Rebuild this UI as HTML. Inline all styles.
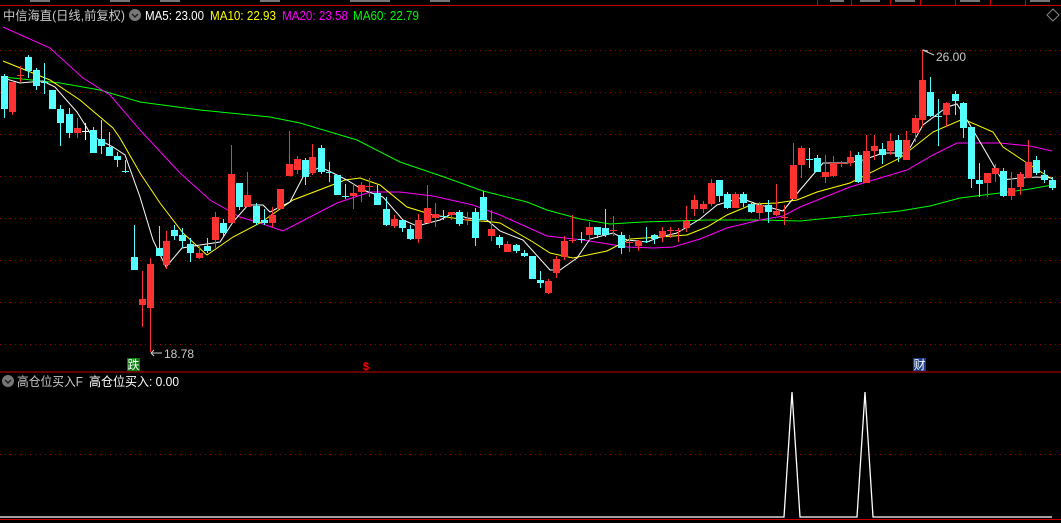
<!DOCTYPE html>
<html><head><meta charset="utf-8"><style>
html,body{margin:0;padding:0;background:#000;width:1061px;height:523px;overflow:hidden}
svg{display:block}
text{font-family:"Liberation Sans","Noto Sans CJK SC",sans-serif}
</style></head><body>
<svg width="1061" height="523" viewBox="0 0 1061 523" xmlns="http://www.w3.org/2000/svg">
<rect width="1061" height="523" fill="#000"/>
<!-- top bar -->
<line x1="0" y1="5.5" x2="1061" y2="5.5" stroke="#c00" stroke-width="1"/>
<g stroke="#c00"><line x1="817.5" y1="0" x2="817.5" y2="5"/><line x1="851.5" y1="0" x2="851.5" y2="5"/><line x1="890.5" y1="0" x2="890.5" y2="5"/><line x1="920.5" y1="0" x2="920.5" y2="5"/><line x1="955.5" y1="0" x2="955.5" y2="5"/><line x1="990.5" y1="0" x2="990.5" y2="5"/><line x1="1025.5" y1="0" x2="1025.5" y2="5"/></g>
<g fill="#777"><rect x="30" y="0" width="20" height="2"/><rect x="110" y="0" width="20" height="2"/><rect x="160" y="0" width="20" height="2"/><rect x="260" y="0" width="20" height="2"/><rect x="350" y="0" width="40" height="2"/><rect x="430" y="0" width="20" height="2"/><rect x="830" y="0" width="14" height="2"/><rect x="860" y="0" width="20" height="2"/><rect x="895" y="0" width="20" height="2"/><rect x="960" y="0" width="20" height="2"/><rect x="1030" y="0" width="20" height="2"/></g>
<path d="M1053 9 L1059 15 L1053 21 L1047 15Z" fill="none" stroke="#888"/>
<!-- header -->
<text x="3" y="20" font-size="12.5" fill="#c8c8c8" textLength="122" lengthAdjust="spacingAndGlyphs">中信海直(日线,前复权)</text>
<circle cx="135" cy="15" r="6" fill="#777"/><path d="M132 14 L135 17 L138 14" stroke="#222" stroke-width="1.5" fill="none"/>
<text x="145" y="20" font-size="12.5" fill="#fff" textLength="59" lengthAdjust="spacingAndGlyphs">MA5: 23.00</text>
<text x="210" y="20" font-size="12.5" fill="#ff0" textLength="66" lengthAdjust="spacingAndGlyphs">MA10: 22.93</text>
<text x="282" y="20" font-size="12.5" fill="#f0f" textLength="66" lengthAdjust="spacingAndGlyphs">MA20: 23.58</text>
<text x="353" y="20" font-size="12.5" fill="#0f0" textLength="66" lengthAdjust="spacingAndGlyphs">MA60: 22.79</text>
<!-- grid -->
<g stroke="#a00000" stroke-dasharray="1,4" stroke-width="1">
<line x1="0" y1="50.5" x2="1061" y2="50.5"/><line x1="0" y1="92.5" x2="1061" y2="92.5"/><line x1="0" y1="134.5" x2="1061" y2="134.5"/><line x1="0" y1="176.5" x2="1061" y2="176.5"/><line x1="0" y1="218.5" x2="1061" y2="218.5"/><line x1="0" y1="260.5" x2="1061" y2="260.5"/><line x1="0" y1="302.5" x2="1061" y2="302.5"/><line x1="0" y1="344.5" x2="1061" y2="344.5"/><line x1="0" y1="454.5" x2="1061" y2="454.5"/>
</g>
<!-- MA lines -->
<polyline fill="none" stroke="#0f0" stroke-width="1" points="3,77 60,83 100,90 140,102 200,110 270,117 300,123 357,140 400,162 447,178 483,191 527,202 547,210 580,219 610,224 643,222 707,220 760,220 800,221 830,218 870,214 900,211 930,206 960,198 1000,193 1030,189 1052,185"/>
<polyline fill="none" stroke="#f0f" stroke-width="1" points="3,27 50,48 83,78 110,95 140,130 180,173 210,200 240,217 260,223 283,231 310,217 337,203 370,192 400,192 433,196 473,205 500,215 527,227 547,236 583,240 627,247 653,248 673,247 700,239 727,228 760,220 783,216 800,207 850,187 907,170 933,155 957,143 1000,143 1030,146 1052,151"/>
<polyline fill="none" stroke="#ff0" stroke-width="1" points="3,61 50,80 80,100 113,128 120,138 140,173 160,203 183,233 207,255 233,237 260,223 293,200 327,187 345,180 360,178 380,185 407,207 433,215 467,220 493,222 500,223 533,242 550,253 573,258 607,251 630,239 660,237 687,235 707,227 727,215 753,204 777,203 797,200 817,192 850,183 900,158 933,132 963,119 993,132 1003,147 1027,163 1052,179"/>
<polyline fill="none" stroke="#fff" stroke-width="1" points="3,78 20,83 43,81 55,87 77,112 92,136 113,147 125,155 140,197 153,240 166,267 182,248 200,245 220,242 233,222 248,205 263,205 270,212 290,202 303,177 320,167 333,173 347,180 363,190 383,197 403,220 417,226 440,220 453,213 467,218 487,220 500,231 523,240 550,270 560,270 577,258 590,239 613,233 627,240 647,242 660,237 677,233 700,219 717,205 740,198 757,204 783,211 800,190 823,163 847,163 863,160 883,153 907,153 923,125 947,107 957,104 967,120 983,147 1002,180 1020,178 1037,177 1052,178"/>
<!-- wicks -->
<path stroke="#ff3232" stroke-width="1" fill="none" d="M12.5 82V115M20.5 66V82M77.5 118V138M142.5 271V327M150.5 258V352M166.5 231V269M199.5 245V259M215.5 212V248M231.5 145V223M247.5 172V207M272.5 207V227M280.5 189V209M289.5 131V176M297.5 156V174M312.5 144V175M353.5 183V209M361.5 182V202M369.5 178V197M394.5 215V228M418.5 214V243M427.5 185V223M435.5 203V227M451.5 212V220M467.5 212V225M491.5 210V241M507.5 241V252M548.5 279V294M556.5 256V278M564.5 236V260M572.5 215V243M589.5 222V240M613.5 216V236M629.5 235V252M638.5 240V251M662.5 227V242M670.5 227V238M678.5 228V242M686.5 206V232M694.5 195V216M703.5 201V213M711.5 179V206M735.5 192V208M759.5 202V219M776.5 184V216M784.5 205V225M793.5 143V199M801.5 146V178M825.5 155V183M833.5 156V177M841.5 161V167M850.5 151V166M866.5 135V183M874.5 135V160M890.5 133V155M906.5 131V160M915.5 115V142M922.5 50V127M946.5 102V127M987.5 173V197M995.5 164V182M1011.5 172V200M1020.5 172V195M1028.5 140V178"/>
<path stroke="#55ffff" stroke-width="1" fill="none" d="M4.5 74V118M28.5 55V78M36.5 68V90M44.5 63V94M52.5 90V109M60.5 105V146M69.5 108V138M93.5 127V153M101.5 120V154M109.5 132V156M117.5 152V167M125.5 160V173M134.5 225V270M159.5 226V256M174.5 225V240M182.5 228V248M190.5 238V262M207.5 238V253M223.5 219V236M239.5 183V210M256.5 203V225M264.5 209V225M305.5 158V185M321.5 145V174M329.5 162V182M337.5 175V195M345.5 184V199M377.5 185V205M386.5 197V226M402.5 220V232M410.5 225V240M443.5 210V220M459.5 210V226M475.5 208V246M483.5 191V220M499.5 235V248M516.5 244V253M524.5 250V257M532.5 256V279M540.5 271V288M581.5 232V243M597.5 227V238M605.5 209V237M621.5 232V254M646.5 227V243M654.5 234V244M719.5 180V202M727.5 192V209M743.5 192V207M751.5 203V213M768.5 200V223M809.5 148V168M817.5 155V172M858.5 152V183M882.5 143V164M898.5 135V162M930.5 77V117M938.5 99V146M955.5 91V115M963.5 102V138M971.5 127V188M979.5 163V197M1003.5 168V197M1036.5 156V175M1044.5 170V183M1052.5 177V190"/>
<path stroke="#fff" stroke-width="1" d="M85.5 123V140M82 131.5h7"/>
<!-- bodies -->
<path fill="#ff3232" d="M9 82h7v30h-7zM17 75h7v1h-7zM74 128h7v5h-7zM139 299h7v6h-7zM147 264h7v44h-7zM163 241h7v24h-7zM196 253h7v5h-7zM212 217h7v23h-7zM228 174h7v49h-7zM244 195h7v12h-7zM269 215h7v8h-7zM277 189h7v20h-7zM286 164h7v12h-7zM294 159h7v11h-7zM309 157h7v16h-7zM350 193h7v3h-7zM358 185h7v7h-7zM366 186h7v1h-7zM391 219h7v7h-7zM415 220h7v19h-7zM424 208h7v15h-7zM432 214h7v4h-7zM448 212h7v3h-7zM464 219h7v1h-7zM488 229h7v7h-7zM504 244h7v8h-7zM545 281h7v12h-7zM553 259h7v14h-7zM561 241h7v16h-7zM569 240h7v1h-7zM586 227h7v8h-7zM610 230h7v1h-7zM626 242h7v1h-7zM635 241h7v5h-7zM659 231h7v6h-7zM667 230h7v1h-7zM675 230h7v1h-7zM683 221h7v7h-7zM691 200h7v9h-7zM700 204h7v5h-7zM708 183h7v21h-7zM732 194h7v14h-7zM756 205h7v8h-7zM773 211h7v4h-7zM781 217h7v1h-7zM790 165h7v34h-7zM798 148h7v17h-7zM822 172h7v5h-7zM830 163h7v13h-7zM838 163h7v1h-7zM847 157h7v6h-7zM863 151h7v32h-7zM871 146h7v5h-7zM887 141h7v10h-7zM903 140h7v20h-7zM912 118h7v15h-7zM919 80h7v40h-7zM943 103h7v12h-7zM984 173h7v10h-7zM992 168h7v6h-7zM1008 188h7v8h-7zM1017 174h7v13h-7zM1025 162h7v16h-7z"/>
<path fill="#55ffff" d="M1 76h7v33h-7zM25 57h7v14h-7zM33 70h7v16h-7zM41 82h7v1h-7zM49 90h7v19h-7zM57 109h7v14h-7zM66 114h7v19h-7zM90 130h7v23h-7zM98 139h7v7h-7zM106 147h7v9h-7zM114 156h7v4h-7zM122 171h7v1h-7zM131 257h7v13h-7zM156 248h7v8h-7zM171 230h7v6h-7zM179 235h7v6h-7zM187 244h7v9h-7zM204 246h7v5h-7zM220 223h7v10h-7zM236 183h7v24h-7zM253 206h7v17h-7zM261 220h7v3h-7zM302 160h7v17h-7zM318 148h7v24h-7zM326 172h7v1h-7zM334 175h7v20h-7zM342 196h7v1h-7zM374 193h7v12h-7zM383 209h7v16h-7zM399 220h7v8h-7zM407 229h7v10h-7zM440 216h7v1h-7zM456 212h7v12h-7zM472 212h7v26h-7zM480 197h7v23h-7zM496 237h7v8h-7zM513 245h7v6h-7zM521 253h7v3h-7zM529 256h7v23h-7zM537 280h7v3h-7zM578 239h7v1h-7zM594 227h7v8h-7zM602 228h7v7h-7zM618 235h7v13h-7zM643 241h7v1h-7zM651 235h7v4h-7zM716 180h7v16h-7zM724 194h7v14h-7zM740 194h7v9h-7zM748 204h7v8h-7zM765 205h7v7h-7zM806 159h7v1h-7zM814 158h7v14h-7zM855 155h7v27h-7zM879 149h7v6h-7zM895 140h7v17h-7zM927 92h7v24h-7zM935 116h7v1h-7zM952 94h7v7h-7zM960 103h7v25h-7zM968 127h7v52h-7zM976 180h7v4h-7zM1000 171h7v25h-7zM1033 160h7v13h-7zM1041 175h7v5h-7zM1049 180h7v8h-7z"/>
<!-- annotations -->
<path d="M922.5 50 L928 51 M922.5 50 L934 55" stroke="#ccc" fill="none"/>
<text x="936" y="61" font-size="12" fill="#c8c8c8">26.00</text>
<path d="M151 353 H162 M151 353 L154 350 M151 353 L154 356" stroke="#ccc" fill="none"/>
<text x="164" y="358" font-size="12" fill="#c8c8c8">18.78</text>
<rect x="127" y="358" width="13" height="13" fill="#0a7a0a"/>
<text x="127.5" y="369" font-size="12" fill="#fff">跌</text>
<text x="363" y="370" font-size="11" font-weight="bold" fill="#f00">$</text>
<rect x="913" y="358" width="13" height="13" fill="#1a3d8a"/>
<text x="913.5" y="369" font-size="12" fill="#fff">财</text>
<!-- separator -->
<line x1="0" y1="372" x2="1061" y2="372" stroke="#c00" stroke-width="1"/>
<circle cx="8" cy="381" r="6" fill="#777"/><path d="M5 380 L8 383 L11 380" stroke="#222" stroke-width="1.5" fill="none"/>
<text x="17" y="386" font-size="12.5" fill="#c8c8c8" textLength="66" lengthAdjust="spacingAndGlyphs">高仓位买入F</text>
<text x="89" y="386" font-size="12.5" fill="#fff" textLength="90" lengthAdjust="spacingAndGlyphs">高仓位买入: 0.00</text>
<!-- indicator -->
<polyline fill="none" stroke="#fff" stroke-width="1.3" points="0,517 784,517 792,392 800,517 857,517 865,392 873,517 1052,517"/>
<line x1="0" y1="519.5" x2="1061" y2="519.5" stroke="#c00"/>
</svg>
</body></html>
